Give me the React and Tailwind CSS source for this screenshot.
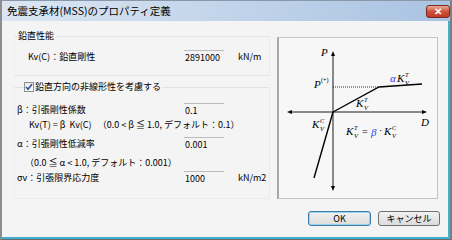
import React from 'react';

const ui = { fontFamily: '"Noto Sans CJK JP", "Liberation Sans", sans-serif' };

const Field = ({ value, unit }) => (
  <div className="flex items-center">
    <div className="w-[40px] h-[14px] border-t border-[#bcbcbc] pl-[1px] leading-[13px]">{value}</div>
    {unit && <span className="ml-[14px]">{unit}</span>}
  </div>
);

const KV = ({ x, y, sup }) => (
  <g fontFamily='"Liberation Serif", serif' fontStyle="italic" fill="#000">
    <text x={x} y={y} fontSize="11">K</text>
    <text x={x + 8} y={y - 5} fontSize="6.5">{sup}</text>
    <text x={x + 8} y={y + 3} fontSize="6.5">V</text>
  </g>
);

const Diagram = () => (
  <svg width="159" height="160" viewBox="0 0 159 160">
    {/* axes */}
    <line x1="54" y1="16" x2="54" y2="150" stroke="#000" strokeWidth="0.9" />
    <path d="M54 13 L52 18 L56 18 Z" fill="#000" />
    <path d="M54 153 L52 148 L56 148 Z" fill="#000" />
    <line x1="11" y1="74" x2="145" y2="74" stroke="#000" strokeWidth="0.9" />
    <path d="M8 74 L13 72 L13 76 Z" fill="#000" />
    <path d="M148 74 L143 72 L143 76 Z" fill="#000" />
    {/* dotted yield level */}
    <line x1="54" y1="49" x2="100" y2="49" stroke="#000" strokeWidth="0.8" strokeDasharray="1 1" />
    {/* tension branch */}
    <polyline points="54,74 100,49 143,46" fill="none" stroke="#000" strokeWidth="1.4" />
    {/* compression branch */}
    <line x1="54" y1="74" x2="35" y2="140" stroke="#000" strokeWidth="1.4" />
    <g fontFamily='"Liberation Serif", serif' fontStyle="italic" fill="#000">
      <text x="42" y="18" fontSize="11">P</text>
      <text x="35" y="50" fontSize="11">P</text>
      <text x="142" y="88" fontSize="11">D</text>
      <text x="111" y="44" fontSize="11" fill="#2a3df0">α</text>
      <text x="92" y="98" fontSize="11" fill="#2a3df0">β</text>
    </g>
    <text x="42" y="44" fontSize="6" fontFamily='"Liberation Serif", serif'>(+)</text>
    <KV x={118} y={44} sup="T" />
    <KV x={77} y={69} sup="T" />
    <KV x={33} y={90} sup="C" />
    <KV x={67} y={97} sup="T" />
    <text x="83" y="97" fontSize="10" fontFamily='"Liberation Serif", serif'>=</text>
    <text x="100" y="96" fontSize="10" fontFamily='"Liberation Serif", serif'>·</text>
    <KV x={105} y={97} sup="C" />
  </svg>
);

export default function App() {
  return (
    <div
      className="w-[452px] h-[240px] flex flex-col border-l-2 border-l-[#8d8d8d] border-r-2 border-r-[#7e7e7e] border-t border-t-[#8a97a8] border-b border-b-[#6a6a6a] text-[9px] text-black overflow-hidden"
      style={ui}
    >
      {/* title bar */}
      <div className="h-[20px] flex items-start justify-between bg-gradient-to-r from-[#dce6f2] via-[#c2d4ea] to-[#a9c3e2]">
        <span className="pl-[5px] pt-[3px] text-[10.5px] leading-[14px]">免震支承材(MSS)のプロパティ定義</span>
        <div className="mt-[4px] w-[24px] h-[13px] rounded-[3px] border border-[#7a2a22] bg-gradient-to-b from-[#e9a89a] via-[#d0523c] to-[#c03a24] flex items-center justify-center text-white text-[10px] leading-none font-bold" style={{ fontFamily: '"Liberation Sans", sans-serif' }}>
          ✕
        </div>
      </div>

      {/* body */}
      <div className="flex-1 bg-[#f4f4f4] border-r-2 border-r-[#3fb0cf] border-b-2 border-b-[#3fb0cf] flex flex-col pl-[12px] pr-[6px] pt-[9px]">
        <div className="flex items-start">
          <div className="w-[256px] flex flex-col">
            <fieldset className="border border-[#dde4ec] border-l-[#eef0f3] border-r-[#e8ecf0] h-[46px] pl-[2px]">
              <legend className="px-[1px] leading-[12px]">鉛直性能</legend>
              <div className="flex items-center h-[14px] mt-[8px] pl-[11px]">
                <span className="w-[156px]">Kv(C)：鉛直剛性</span>
                <Field value="2891000" unit="kN/m" />
              </div>
            </fieldset>

            <fieldset className="mt-[5px] border border-[#dde4ec] border-l-[#eef0f3] border-r-[#e8ecf0] border-b-[#e8ecf0] h-[118px]">
              <legend className="ml-[9px] flex items-center leading-[12px]">
                <span className="w-[10px] h-[10px] border border-[#8e8f8f] bg-gradient-to-b from-[#e9e9e9] to-[#ffffff] flex items-center justify-center">
                  <svg width="8" height="8" viewBox="0 0 8 8">
                    <path d="M1 4 L3 6.3 L7 1.2" fill="none" stroke="#2f4f9a" strokeWidth="1.6" />
                  </svg>
                </span>
                <span className="ml-[1px] pr-[1px]">鉛直方向の非線形性を考慮する</span>
              </legend>
              <div className="flex items-center h-[14px] mt-[10px] pl-[2px]">
                <span className="w-[167px]">β：引張剛性係数</span>
                <Field value="0.1" />
              </div>
              <div className="h-[14px] mt-[1px] pl-[14px] leading-[14px]">
                Kv(T) = β&nbsp;&nbsp;Kv(C)&nbsp;&nbsp;&nbsp;（0.0 &lt; β ≦ 1.0, デフォルト：0.1）
              </div>
              <div className="flex items-center h-[14px] mt-[5px] pl-[2px]">
                <span className="w-[167px]">α：引張剛性低減率</span>
                <Field value="0.001" />
              </div>
              <div className="h-[14px] mt-[5px] pl-[10px] leading-[14px]">
                （0.0 ≦ α &lt; 1.0, デフォルト：0.001）
              </div>
              <div className="flex items-center h-[14px] mt-[1px] pl-[2px]">
                <span className="w-[167px]">σv：引張限界応力度</span>
                <Field value="1000" unit="kN/m2" />
              </div>
            </fieldset>
          </div>

          <div className="ml-[7px] mt-[7px] w-[161px] h-[162px] border border-[#c4c4c4] border-l-2 border-l-[#a8a8a8] bg-[#f7f7f7]">
            <Diagram />
          </div>
        </div>

        <div className="flex justify-end gap-[7px] mt-[12px] pr-[2px]">
          <button className="w-[63px] h-[15px] rounded-[3px] border border-[#3d7bad] bg-gradient-to-b from-[#f2f2f2] to-[#dcdcdc] text-[9px] leading-[13px] shadow-[inset_0_0_0_1px_#9ad3ee]">
            OK
          </button>
          <button className="w-[62px] h-[15px] rounded-[3px] border border-[#707070] bg-gradient-to-b from-[#f2f2f2] to-[#dcdcdc] text-[9px] leading-[13px]">
            キャンセル
          </button>
        </div>
      </div>
    </div>
  );
}
